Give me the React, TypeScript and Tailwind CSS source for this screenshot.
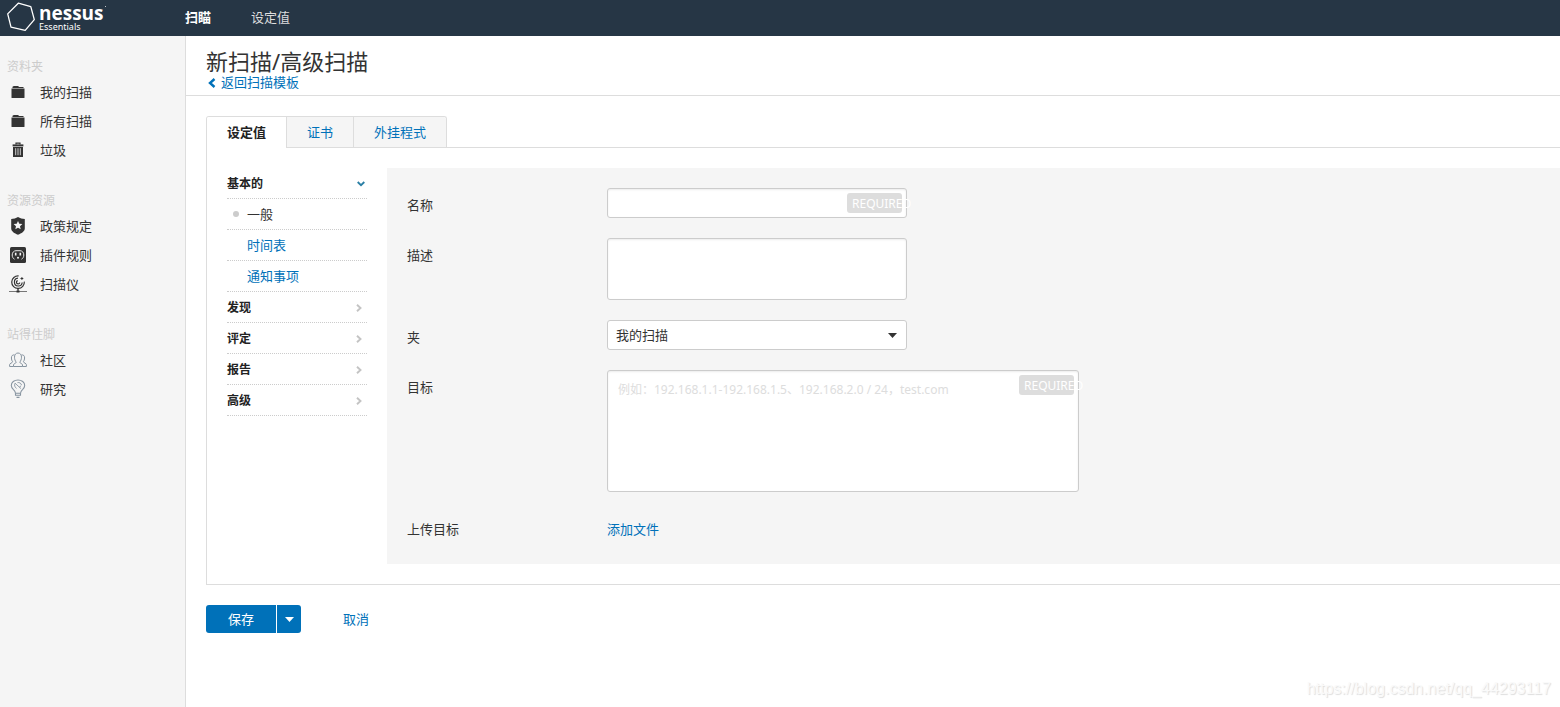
import { useState, type ReactNode } from "react";

function FolderIcon() {
  return (
    <svg width="14" height="14" viewBox="0 0 14 14" fill="#333" aria-hidden="true">
      <path d="M1.5 3V1.800L2.800 1H7l1.200 1h4.300v1z" />
      <path d="M.5 3.600h13V12.400c0 .4-.3.6-.6.6H1.100c-.4 0-.6-.2-.6-.6z" />
    </svg>
  );
}

function TrashIcon() {
  return (
    <svg width="12" height="16" viewBox="0 0 12 16" fill="none" aria-hidden="true">
      <path d="M4 2.500V1.200h4v1.300" stroke="#333" strokeWidth="1.200" />
      <path d="M.6 2.400h10.800v2H.6z" fill="#333" />
      <path d="M1 5h10v10H1z" fill="#333" />
      <path d="M3.700 6.200v7M6 6.200v7M8.300 6.200v7" stroke="#f5f5f5" strokeWidth=".8" />
    </svg>
  );
}

function ShieldIcon() {
  return (
    <svg width="16" height="18" viewBox="0 0 16 18" aria-hidden="true">
      <path d="M8 0c2 1.300 4.300 2 6.800 2v9.500c0 2.800-3.300 4.800-6.800 6.300-3.500-1.500-6.800-3.500-6.800-6.300V2C3.700 2 6 1.300 8 0z" fill="#333" />
      <path d="M8 3.900l1.300 2.900 3.100.3-2.400 2.100.7 3.100L8 10.700l-2.700 1.600.7-3.100-2.400-2.100 3.100-.3z" fill="#f5f5f5" />
    </svg>
  );
}

function PluginIcon() {
  return (
    <svg width="16" height="16" viewBox="0 0 16 16" fill="none" aria-hidden="true">
      <rect width="16" height="16" rx="1.5" fill="#333" />
      <path d="M4.500 12.200C2.900 11.300 2.200 9.900 2.200 8c0-2.500 1.600-4.300 3.800-4.300h4c2.200 0 3.800 1.800 3.800 4.300 0 1.900-.7 3.300-2.300 4.200" stroke="#e8e8e8" strokeWidth="1" />
      <path d="M5.700 5.800v2.700M10.300 5.800v2.700" stroke="#f5f5f5" strokeWidth="1.600" />
      <path d="M7 11.600v-.9a1 1 0 0 1 2 0v.9z" fill="#f5f5f5" />
    </svg>
  );
}

function ScannerIcon() {
  return (
    <svg width="18" height="18" viewBox="0 0 18 18" fill="none" stroke="#333" aria-hidden="true">
      <path d="M9.600.9A6.300 6.300 0 1 0 15.300 6.600" strokeWidth="1.200" />
      <path d="M9 3.200a3.900 3.900 0 1 0 4.200 4.300" strokeWidth="1.200" />
      <path d="M8.700 5.600a1.700 1.700 0 1 0 2.100 2" strokeWidth="1.200" />
      <path d="M12.900 2.100v2.800M11.500 3.500h2.800" strokeWidth="1" />
      <path d="M9 13.200v2.600" strokeWidth="1.400" />
      <path d="M0 16.500h18" strokeWidth="1" stroke="#777" />
      <path d="M7.500 16.500h3" strokeWidth="2" />
    </svg>
  );
}

function CommunityIcon() {
  return (
    <svg width="18" height="16" viewBox="0 0 18 16" fill="none" stroke="#8794a0" strokeWidth="1" aria-hidden="true">
      <path d="M4.500 14.500v-1.800c0-1 2.600-1.300 2.700-2.500C6.300 9 5.500 7.300 5.500 5.200 5.500 2.700 6.900 1 9 1s3.500 1.700 3.500 4.200c0 2.100-.8 3.800-1.700 5 .1 1.200 2.700 1.500 2.700 2.500v1.800z" />
      <path d="M5.600 3C3.500 2.500 2.300 3.900 2.400 6c0 1.700.5 2.800 1.200 3.700C3.500 11 .6 11.200.6 12.700v1.800h3.900" />
      <path d="M12.400 3c2.100-.5 3.300.9 3.200 3 0 1.700-.5 2.800-1.200 3.700.1 1.300 3 1.500 3 3v1.800h-3.900" />
    </svg>
  );
}

function ResearchIcon() {
  return (
    <svg width="16" height="20" viewBox="0 0 16 20" fill="none" stroke="#8794a0" strokeWidth="1.100" aria-hidden="true">
      <path d="M5.500 14.200c0-1.500-.8-2.500-2-3.600C2.300 9.400 1.300 8.200 1.300 6.400 1.300 3.300 4.300 1 8 1s6.700 2.300 6.700 5.400c0 1.800-1 3-2.200 4.200-1.200 1.100-2 2.100-2 3.600z" />
      <path d="M5.500 14.200v2h5v-2M6.500 18.400h3" />
      <path d="M5 4.200l6 5.400M5 4.200c-1 2 0 4.500 1.600 5.200M7.500 3.600c1.700-.4 3.600.6 4 2.400M9.300 8.200l1.900-1.500" strokeWidth=".9" />
    </svg>
  );
}

function Caret({ className }: { className: string }) {
  return (
    <svg width="9" height="5" viewBox="0 0 9 5" className={className} fill="currentColor" aria-hidden="true">
      <path d="M0 0h9L4.500 5z" />
    </svg>
  );
}

function Chevron({ open }: { open: boolean }) {
  return open ? (
    <svg width="8" height="6" viewBox="0 0 8 6" fill="none" stroke="#2a7fa5" strokeWidth="1.800" className="mr-0.5" aria-hidden="true">
      <path d="M.7 1L4 4.200 7.300 1" />
    </svg>
  ) : (
    <svg width="6" height="8" viewBox="0 0 6 8" fill="none" stroke="#c4c4c4" strokeWidth="1.900" className="mr-[5px]" aria-hidden="true">
      <path d="M1 .7L4.500 4 1 7.300" />
    </svg>
  );
}

function Logo() {
  return (
    <a href="#home" aria-label="nessus Essentials" className="flex w-[185px] items-center pl-1.5 text-white">
      <svg width="30" height="30" viewBox="0 0 30 30" fill="none" stroke="#fff" strokeWidth="1.300" aria-hidden="true" className="mb-0.5">
        <path d="M12.300 1.200L24.800 4.700 28.300 17.600 19.200 28.300 5 25.200 1.700 11.900z" strokeLinejoin="round" />
      </svg>
      <span className="relative ml-[3px] flex flex-col">
        <span className="font-['Open_Sans','Noto_Sans',sans-serif] text-[19px] leading-[18px] font-bold">nessus</span>
        <span className="text-[9px] leading-[10px]">Essentials</span>
        <span className="absolute top-0.5 -right-0.5 size-px bg-white/70" />
      </span>
    </a>
  );
}

const sections: { title: string; items: { label: string; icon: ReactNode }[] }[] = [
  {
    title: "资料夹",
    items: [
      { label: "我的扫描", icon: <FolderIcon /> },
      { label: "所有扫描", icon: <FolderIcon /> },
      { label: "垃圾", icon: <TrashIcon /> },
    ],
  },
  {
    title: "资源资源",
    items: [
      { label: "政策规定", icon: <ShieldIcon /> },
      { label: "插件规则", icon: <PluginIcon /> },
      { label: "扫描仪", icon: <ScannerIcon /> },
    ],
  },
  {
    title: "站得住脚",
    items: [
      { label: "社区", icon: <CommunityIcon /> },
      { label: "研究", icon: <ResearchIcon /> },
    ],
  },
];

function Sidebar() {
  return (
    <aside className="w-[186px] shrink-0 border-r border-[#ddd] bg-[#f5f5f5] pt-5">
      {sections.map((section) => (
        <nav key={section.title} aria-label={section.title} className="mb-[25px]">
          <h2 className="pl-[7px] text-[12px] leading-[22px] text-[#ccc]">{section.title}</h2>
          <ul>
            {section.items.map((item) => (
              <li key={item.label}>
                <a href="#folder" className="flex h-[29px] items-center gap-3 pb-px pl-[7px]">
                  <span className="flex w-[21px] justify-center">{item.icon}</span>
                  {item.label}
                </a>
              </li>
            ))}
          </ul>
        </nav>
      ))}
    </aside>
  );
}

const tabs = ["设定值", "证书", "外挂程式"];

function Tabs({ active, onSelect }: { active: string; onSelect: (tab: string) => void }) {
  return (
    <div role="tablist" className="flex h-8">
      <div className="flex overflow-hidden rounded-t-[3px] border border-b-0 border-[#ddd]">
        {tabs.map((tab) => (
          <button
            key={tab}
            role="tab"
            aria-selected={tab === active}
            onClick={() => onSelect(tab)}
            className={
              tab === active
                ? "border-b border-white bg-white px-5 pb-px font-bold text-[#222]"
                : "border-b border-l border-[#ddd] bg-[#f5f5f5] px-5 pb-px text-[#0071b9]"
            }
          >
            {tab}
          </button>
        ))}
      </div>
      <div className="grow border-b border-[#ddd]" />
    </div>
  );
}

const rowBorder = "border-b border-dotted border-[#ccc]";
const groupButton = "flex h-[30px] w-full items-center justify-between pt-px text-[12px] font-bold text-[#222]";

function SettingsNav() {
  return (
    <ul className="w-[140px] shrink-0">
      <li className={rowBorder}>
        <button className={groupButton}>
          基本的
          <Chevron open />
        </button>
      </li>
      <li className={rowBorder}>
        <a href="#general" className="flex h-[30px] items-center pb-px pl-1.5">
          <span className="mr-2 size-1.5 rounded-full bg-[#ccc]" />
          一般
        </a>
      </li>
      {["时间表", "通知事项"].map((label) => (
        <li key={label} className={rowBorder}>
          <a href="#section" className="flex h-[30px] items-center pb-px pl-5 text-[#0071b9]">
            {label}
          </a>
        </li>
      ))}
      {["发现", "评定", "报告", "高级"].map((label) => (
        <li key={label} className={rowBorder}>
          <button className={groupButton}>
            {label}
            <Chevron open={false} />
          </button>
        </li>
      ))}
    </ul>
  );
}

function Row({ label, htmlFor, children }: { label: string; htmlFor: string; children: ReactNode }) {
  return (
    <div className="flex">
      <label htmlFor={htmlFor} className="w-[200px] shrink-0 pt-[7px] leading-[20px]">
        {label}
      </label>
      {children}
    </div>
  );
}

function RequiredBadge() {
  return (
    <span className="pointer-events-none absolute top-[5px] right-[5px] h-5 w-[55px] rounded-[3px] bg-[#ddd] pl-[5px] text-[12px] leading-[21px] whitespace-nowrap text-white">
      REQUIRED
    </span>
  );
}

function SettingsForm() {
  return (
    <div className="flex grow flex-col gap-5 bg-[#f5f5f5] p-5">
      <Row label="名称" htmlFor="name">
        <div className="relative w-[300px]">
          <input id="name" className="block h-[30px] w-full rounded-[3px] border border-[#ccc] bg-white px-2 shadow-[inset_0_1px_2px_rgba(0,0,0,0.08)]" />
          <RequiredBadge />
        </div>
      </Row>
      <Row label="描述" htmlFor="description">
        <textarea id="description" className="block h-[62px] w-[300px] resize-none rounded-[3px] border border-[#ccc] bg-white px-2.5 py-2 shadow-[inset_0_1px_2px_rgba(0,0,0,0.08)]" />
      </Row>
      <Row label="夹" htmlFor="folder">
        <div className="relative w-[300px]">
          <select id="folder" className="block h-[30px] w-full appearance-none rounded-[3px] border border-[#ccc] bg-white px-2 pb-px">
            <option>我的扫描</option>
            <option>所有扫描</option>
          </select>
          <Caret className="pointer-events-none absolute top-[13px] right-2.5" />
        </div>
      </Row>
      <Row label="目标" htmlFor="targets">
        <div className="relative w-[472px]">
          <textarea
            id="targets"
            placeholder="例如：192.168.1.1-192.168.1.5、192.168.2.0 / 24，test.com"
            className="block h-[122px] w-full resize-none rounded-[3px] border border-[#ccc] bg-white px-2.5 py-[9px] text-[12px] leading-[20px] shadow-[inset_0_1px_2px_rgba(0,0,0,0.08)] placeholder:text-[#ddd]"
          />
          <RequiredBadge />
        </div>
      </Row>
      <Row label="上传目标" htmlFor="upload">
        <button id="upload" className="h-8 pt-0.5 text-[#0071b9]">
          添加文件
        </button>
      </Row>
    </div>
  );
}

export default function App() {
  const [tab, setTab] = useState("设定值");
  return (
    <div className="flex min-h-screen flex-col bg-white font-['Noto_Sans','Noto_Sans_CJK_SC',sans-serif] text-[13px] leading-[20px] text-[#333]">
      <header className="flex h-9 items-center bg-[#263645]">
        <Logo />
        <nav className="flex gap-10 pb-[3px] text-[#ddd]">
          <a href="#scans" className="font-bold text-white">扫瞄</a>
          <a href="#settings">设定值</a>
        </nav>
      </header>
      <div className="flex grow">
        <Sidebar />
        <main className="relative min-w-0 grow">
          <div className="border-b border-[#ddd] pt-[11px] pb-[5px] pl-5">
            <h1 className="text-[22px] leading-[28px]">新扫描/高级扫描</h1>
            <a href="#templates" className="flex items-center gap-[5px] pl-0.5 leading-[15px] text-[#0071b9]">
              <svg width="8" height="10" viewBox="0 0 8 10" fill="none" stroke="currentColor" strokeWidth="2.400" aria-hidden="true">
                <path d="M6.500 1L2 5l4.500 4" />
              </svg>
              返回扫描模板
            </a>
          </div>
          <div className="pt-5 pl-5">
            <Tabs active={tab} onSelect={setTab} />
            <section className="flex gap-5 border-b border-l border-[#ddd] py-5 pl-5">
              <SettingsNav />
              <SettingsForm />
            </section>
            <div className="flex h-[68px] items-center">
              <button className="h-7 w-[70px] rounded-l-[3px] bg-[#0071b9] pb-px text-white">保存</button>
              <button aria-label="更多" className="ml-px flex h-7 w-6 items-center justify-center rounded-r-[3px] bg-[#0071b9] text-white">
                <Caret className="" />
              </button>
              <button className="ml-[42px] pb-px text-[#0071b9]">取消</button>
            </div>
          </div>
          <span className="absolute right-[9px] bottom-2 font-['Liberation_Sans',sans-serif] text-[16px] text-[#fafafa] [text-shadow:1px_1px_1px_#ddd]">
            https://blog.csdn.net/qq_44293117
          </span>
        </main>
      </div>
    </div>
  );
}
